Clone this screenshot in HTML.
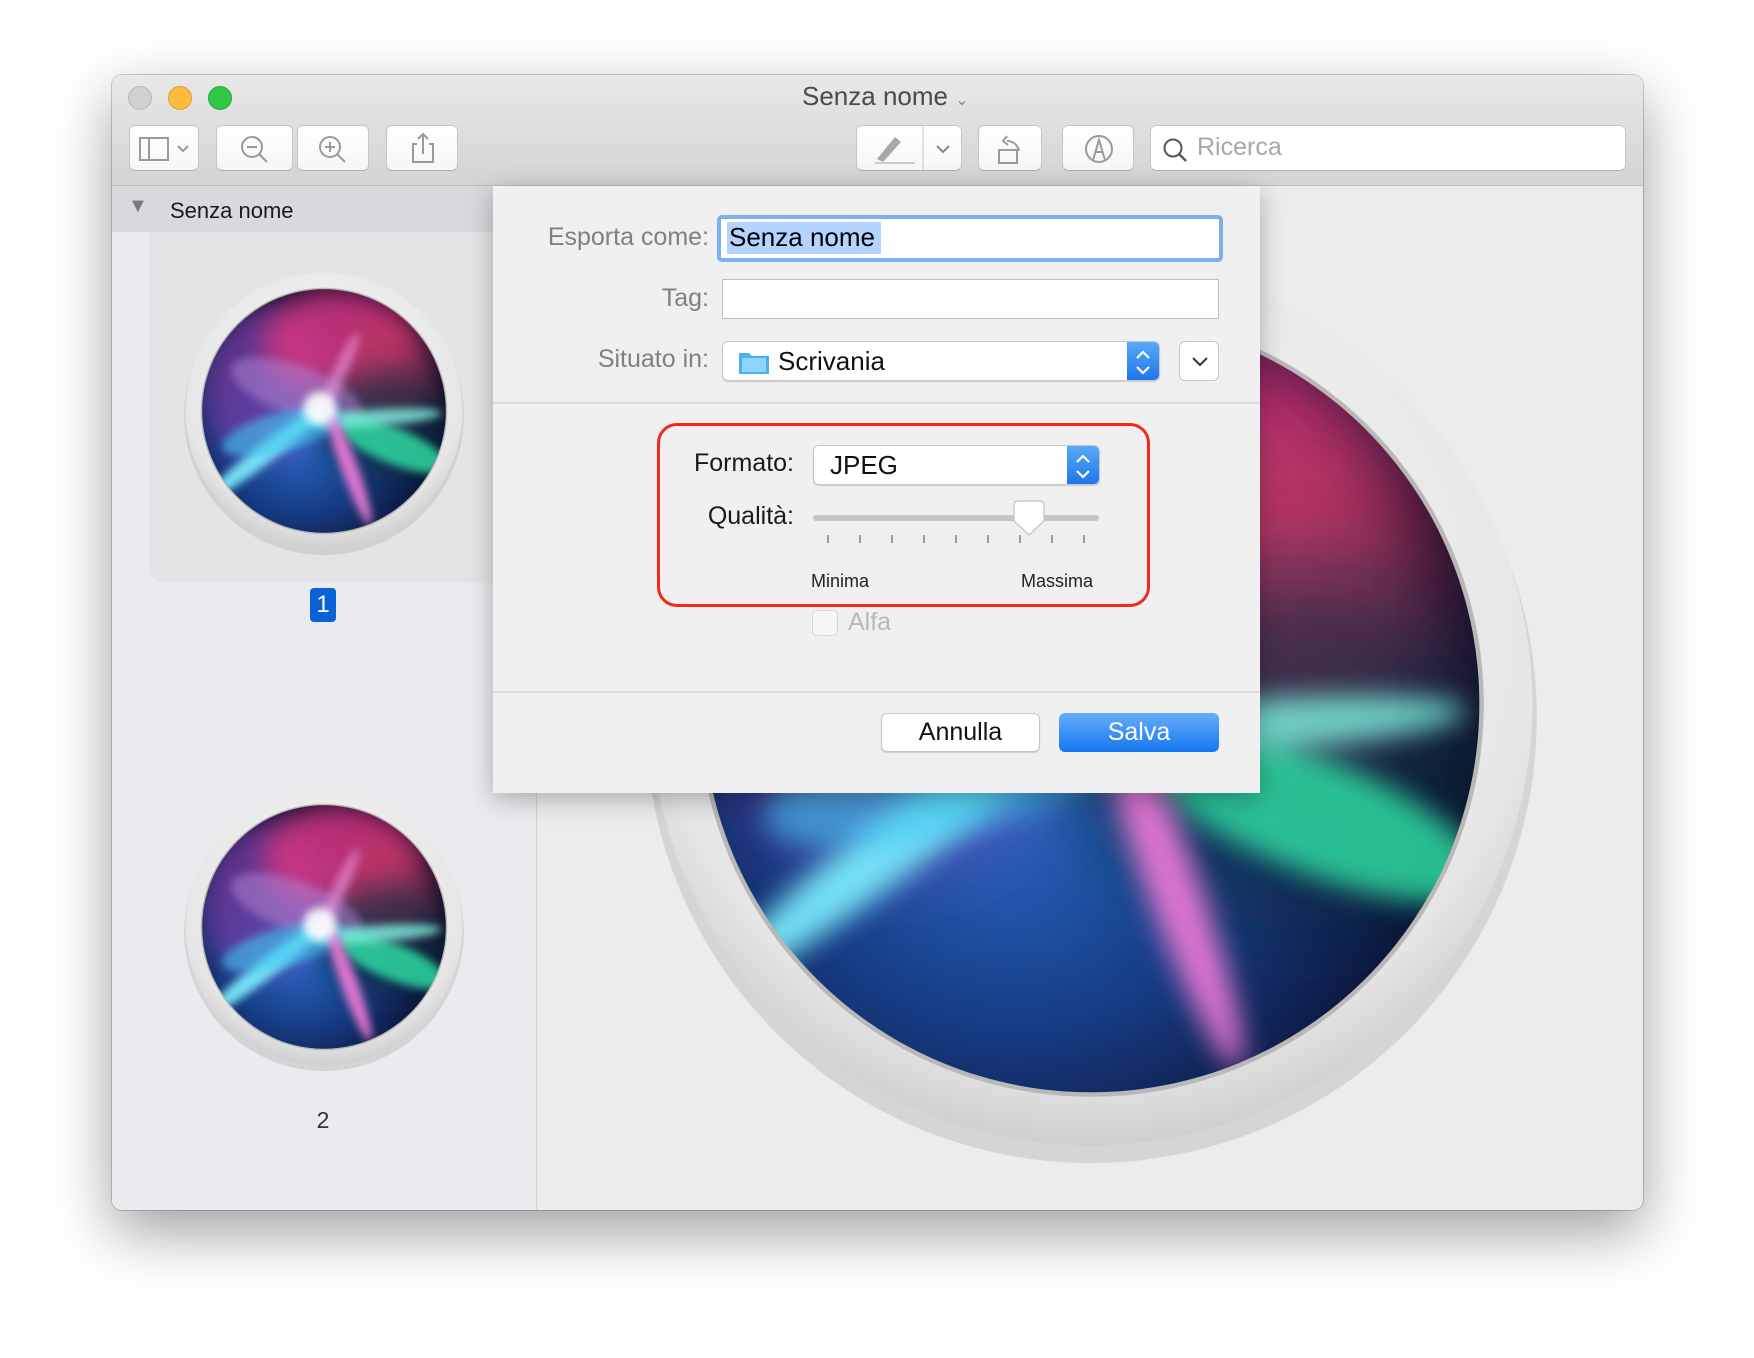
<!DOCTYPE html>
<html><head><meta charset="utf-8">
<style>
*{box-sizing:border-box;margin:0;padding:0}
body{width:1754px;height:1358px;background:#fff;position:relative;overflow:hidden;font-family:"Liberation Sans",sans-serif}
.abs{position:absolute}
#win{left:112px;top:75px;width:1531px;height:1135px;border-radius:10px;background:#ececec;box-shadow:0 22px 60px rgba(0,0,0,.38),0 0 0 1px rgba(0,0,0,.18);overflow:hidden}
#bar{left:0;top:0;width:1531px;height:111px;background:linear-gradient(#e8e8e8,#d4d4d4);border-bottom:1px solid #bdbdbd}
.tl{width:24px;height:24px;border-radius:50%;top:11px}
.btn{background:linear-gradient(#fff,#f6f6f6);border:1px solid #c6c6c6;border-bottom-color:#b0b0b0;border-radius:6px;top:50px;height:46px}
.lab{font-size:25px;color:#808080;text-align:right}
</style></head><body>
<svg width="0" height="0" style="position:absolute">
<defs>
<radialGradient id="ring" cx="50%" cy="40%" r="60%"><stop offset="0" stop-color="#fafafa"/><stop offset=".85" stop-color="#e6e6e6"/><stop offset="1" stop-color="#cfcfcf"/></radialGradient>
<radialGradient id="bg" cx="40%" cy="60%" r="60%"><stop offset="0" stop-color="#2a6fd0"/><stop offset=".55" stop-color="#163a80"/><stop offset="1" stop-color="#0a0b26"/></radialGradient>
<filter id="b4" x="-50%" y="-50%" width="200%" height="200%"><feGaussianBlur stdDeviation="3"/></filter>
<filter id="b10" x="-50%" y="-50%" width="200%" height="200%"><feGaussianBlur stdDeviation="10"/></filter>
<clipPath id="cp"><circle cx="0" cy="0" r="88"/></clipPath>
<g id="siri">
<circle cx="0" cy="3" r="101" fill="#bdbdbd" opacity=".5"/>
<circle cx="0" cy="0" r="100" fill="url(#ring)"/>
<circle cx="0" cy="0" r="89" fill="#b8b8b8"/>
<g clip-path="url(#cp)">
<circle r="88" fill="url(#bg)"/>
<ellipse cx="-45" cy="-20" rx="45" ry="55" fill="#7a3aa0" opacity=".7" filter="url(#b10)"/>
<ellipse cx="10" cy="-50" rx="55" ry="38" fill="#d8357f" opacity=".85" filter="url(#b10)"/>
<ellipse cx="45" cy="-25" rx="35" ry="40" fill="#b8385e" opacity=".7" filter="url(#b10)"/>
<ellipse cx="45" cy="10" rx="50" ry="40" fill="#0d2a3a" opacity=".6" filter="url(#b10)"/>
<ellipse cx="-20" cy="-15" rx="50" ry="18" transform="rotate(20 -20 -15)" fill="#b68ad8" opacity=".5" filter="url(#b4)"/>
<ellipse cx="50" cy="25" rx="42" ry="13" transform="rotate(22 50 25)" fill="#2fd8a0" opacity=".85" filter="url(#b4)"/>
<ellipse cx="35" cy="5" rx="50" ry="6" transform="rotate(-4 35 5)" fill="#7ff5e0" opacity=".8" filter="url(#b4)"/>
<ellipse cx="-42" cy="30" rx="55" ry="7" transform="rotate(-38 -42 30)" fill="#7ef0ff" opacity=".9" filter="url(#b4)"/>
<ellipse cx="-30" cy="15" rx="45" ry="14" transform="rotate(-15 -30 15)" fill="#40c8f0" opacity=".6" filter="url(#b4)"/>
<ellipse cx="18" cy="40" rx="45" ry="6" transform="rotate(70 18 40)" fill="#f07ad8" opacity=".9" filter="url(#b4)"/>
<ellipse cx="10" cy="-25" rx="35" ry="5" transform="rotate(-65 10 -25)" fill="#f09ae8" opacity=".6" filter="url(#b4)"/>
<circle cx="-3" cy="-2" r="12" fill="#fff" opacity=".9" filter="url(#b4)"/>
</g>
</g>
</defs>
</svg>

<div id="win" class="abs">
 <div id="bar" class="abs">
  <div class="abs tl" style="left:16px;background:#d0d0d0;border:1px solid #b8b8b8"></div>
  <div class="abs tl" style="left:56px;background:#fdbc40;border:1px solid #e0a030"></div>
  <div class="abs tl" style="left:96px;background:#33c748;border:1px solid #27a93a"></div>
  <div class="abs" style="left:690px;top:6px;font-size:26px;color:#4a4a4a">Senza nome <span style="font-size:16px;color:#888">&#8964;</span></div>
  <div class="abs btn" style="left:17px;width:70px"><svg width="70" height="46"><rect x="10" y="12" width="28" height="22" fill="none" stroke="#9a9a9a" stroke-width="2"/><line x1="19" y1="12" x2="19" y2="34" stroke="#9a9a9a" stroke-width="2"/><path d="M48 20l5 5 5-5" fill="none" stroke="#9a9a9a" stroke-width="2"/></svg></div>
  <div class="abs btn" style="left:104px;width:77px"><svg width="77" height="46"><circle cx="35" cy="21" r="10" fill="none" stroke="#9a9a9a" stroke-width="2"/><path d="M30 21h10M42 28l8 8" stroke="#9a9a9a" stroke-width="2"/></svg></div>
  <div class="abs btn" style="left:185px;width:72px"><svg width="72" height="46"><circle cx="32" cy="21" r="10" fill="none" stroke="#9a9a9a" stroke-width="2"/><path d="M27 21h10M32 16v10M39 28l8 8" stroke="#9a9a9a" stroke-width="2"/></svg></div>
  <div class="abs btn" style="left:274px;width:72px"><svg width="72" height="46"><path d="M30 18h-4v18h20v-18h-4M36 28v-20M31 13l5-5 5 5" fill="none" stroke="#9a9a9a" stroke-width="2"/></svg></div>
  <div class="abs btn" style="left:744px;width:106px"><svg width="106" height="46"><path d="M20 33l18-22 6 5-18 20z" fill="#a8a8a8"/><path d="M18 37h40" stroke="#ccc" stroke-width="2"/><line x1="66" y1="0" x2="66" y2="46" stroke="#c8c8c8"/><path d="M80 20l6 6 6-6" fill="none" stroke="#888" stroke-width="2"/></svg></div>
  <div class="abs btn" style="left:866px;width:64px"><svg width="64" height="46"><rect x="20" y="24" width="18" height="13" fill="none" stroke="#9a9a9a" stroke-width="2"/><path d="M28 15a12 12 0 0 1 12 10M28 10l-4 5 5 4" fill="none" stroke="#9a9a9a" stroke-width="2"/></svg></div>
  <div class="abs btn" style="left:950px;width:72px"><svg width="72" height="46"><circle cx="36" cy="23" r="13" fill="none" stroke="#9a9a9a" stroke-width="2"/><path d="M30 34l6-20 6 20M33 26h6" fill="none" stroke="#9a9a9a" stroke-width="2"/></svg></div>
  <div class="abs btn" style="left:1038px;width:476px;background:#fff"><svg class="abs" style="left:10px;top:10px" width="30" height="30"><circle cx="12" cy="12" r="8.5" fill="none" stroke="#555" stroke-width="2"/><path d="M18 18l7 7" stroke="#555" stroke-width="2.4"/></svg><div class="abs" style="left:46px;top:7px;font-size:25px;color:#a8a8a8">Ricerca</div></div>
 </div>
 <!-- sidebar -->
 <div class="abs" style="left:0;top:111px;width:425px;height:1024px;background:#ebebef;border-right:1px solid #d2d2d2"></div>
 <div class="abs" style="left:0;top:111px;width:425px;height:46px;background:#d9d9dd"></div>
 <div class="abs" style="left:16px;top:120px;font-size:20px;color:#7a7a7a">&#9660;</div>
 <div class="abs" style="left:58px;top:123px;font-size:22px;color:#1a1a1a">Senza nome</div>
 <div class="abs" style="left:37px;top:157px;width:400px;height:351px;background:#e4e4e6;border-radius:0 0 16px 16px"></div>
 <svg class="abs" style="left:68px;top:192px" width="288" height="288" viewBox="-104 -104 208 208"><use href="#siri"/></svg>
 <div class="abs" style="left:198px;top:513px;width:26px;height:34px;background:#0a62d6;border-radius:4px;color:#fff;font-size:24px;text-align:center;line-height:34px">1</div>
 <svg class="abs" style="left:68px;top:708px" width="288" height="288" viewBox="-104 -104 208 208"><use href="#siri"/></svg>
 <div class="abs" style="left:198px;top:1032px;width:26px;text-align:center;font-size:23px;color:#333">2</div>
 <!-- main -->
 <svg class="abs" style="left:520px;top:170px" width="918" height="918" viewBox="-104 -104 208 208"><use href="#siri"/></svg>
 <!-- dialog -->
 <div class="abs" style="left:381px;top:111px;width:767px;height:607px;background:#f0f0f0;box-shadow:0 6px 24px rgba(0,0,0,.28)">
  <div class="abs lab" style="left:0;width:216px;top:37px">Esporta come:</div>
  <div class="abs" style="left:224px;top:29px;width:506px;height:47px;border:4px solid #7fb0ec;border-radius:5px;background:#fff"></div>
  <div class="abs" style="left:234px;top:36px;height:32px;width:154px;background:#b3d4fe"></div>
  <div class="abs" style="left:236px;top:36px;font-size:26px;color:#000">Senza nome</div>
  <div class="abs lab" style="left:0;width:216px;top:98px">Tag:</div>
  <div class="abs" style="left:229px;top:93px;width:497px;height:40px;border:1px solid #c0c0c0;background:#fff"></div>
  <div class="abs lab" style="left:0;width:216px;top:159px">Situato in:</div>
  <div class="abs" style="left:229px;top:155px;width:438px;height:40px;border:1px solid #c8c8c8;border-radius:6px;background:#fff;overflow:hidden;box-shadow:0 1px 1px rgba(0,0,0,.15)">
   <svg class="abs" style="left:16px;top:8px" width="30" height="24"><path d="M0 3h10l3 3h17v18h-30z" fill="#4bb0f0"/><rect x="3" y="8" width="24" height="14" fill="#8fd4fb"/></svg>
   <div class="abs" style="left:55px;top:4px;font-size:26px;color:#111">Scrivania</div>
   <div class="abs" style="right:0;top:0;width:32px;height:40px;background:linear-gradient(#5aa8f8,#1b74ec)"><svg width="32" height="40"><path d="M10 16l6-6 6 6M10 25l6 6 6-6" fill="none" stroke="#fff" stroke-width="2.2"/></svg></div>
  </div>
  <div class="abs" style="left:686px;top:155px;width:40px;height:40px;border:1px solid #c8c8c8;border-radius:6px;background:#fff"><svg width="40" height="38"><path d="M13 16l7 7 7-7" fill="none" stroke="#333" stroke-width="2"/></svg></div>
  <div class="abs" style="left:0;top:216px;width:767px;height:2px;background:#dcdcdc"></div>
  <div class="abs" style="left:164px;top:237px;width:493px;height:184px;border:3.5px solid #f22a1a;border-radius:20px"></div>
  <div class="abs" style="left:0;width:301px;top:263px;font-size:25px;color:#1a1a1a;text-align:right">Formato:</div>
  <div class="abs" style="left:320px;top:259px;width:287px;height:40px;border:1px solid #c8c8c8;border-radius:6px;background:#fff;overflow:hidden;box-shadow:0 1px 1px rgba(0,0,0,.15)">
   <div class="abs" style="left:16px;top:4px;font-size:26px;color:#111">JPEG</div>
   <div class="abs" style="right:0;top:0;width:32px;height:40px;background:linear-gradient(#5aa8f8,#1b74ec)"><svg width="32" height="40"><path d="M10 16l6-6 6 6M10 25l6 6 6-6" fill="none" stroke="#fff" stroke-width="2.2"/></svg></div>
  </div>
  <div class="abs" style="left:0;width:301px;top:316px;font-size:25px;color:#1a1a1a;text-align:right">Qualità:</div>
  <svg class="abs" style="left:315px;top:313px" width="300" height="70">
   <rect x="5" y="16" width="286" height="6" rx="3" fill="#c4c4c4"/>
   <g stroke="#9a9a9a" stroke-width="2"><path d="M20 36v8M52 36v8M84 36v8M116 36v8M148 36v8M180 36v8M212 36v8M244 36v8M276 36v8"/></g>
   <path d="M206 6q0-4 4-4h22q4 0 4 4v16l-15 14-15-14z" fill="#fff" stroke="#c2c2c2" stroke-width="1.2"/>
  </svg>
  <div class="abs" style="left:318px;top:385px;font-size:18px;color:#222">Minima</div>
  <div class="abs" style="left:528px;top:385px;font-size:18px;color:#222">Massima</div>
  <div class="abs" style="left:319px;top:424px;width:26px;height:26px;border:1px solid #d6d6d6;border-radius:5px;background:#f6f6f6"></div>
  <div class="abs" style="left:355px;top:422px;font-size:25px;color:#b8b8b8">Alfa</div>
  <div class="abs" style="left:0;top:505px;width:767px;height:2px;background:#dcdcdc"></div>
  <div class="abs" style="left:388px;top:527px;width:159px;height:39px;border:1px solid #c6c6c6;border-radius:6px;background:#fff;font-size:25px;color:#111;text-align:center;line-height:37px;box-shadow:0 1px 1px rgba(0,0,0,.15)">Annulla</div>
  <div class="abs" style="left:566px;top:527px;width:160px;height:39px;border-radius:6px;background:linear-gradient(#66aefa,#1577f0);font-size:25px;color:#fff;text-align:center;line-height:39px">Salva</div>
 </div>
</div>
</body></html>
